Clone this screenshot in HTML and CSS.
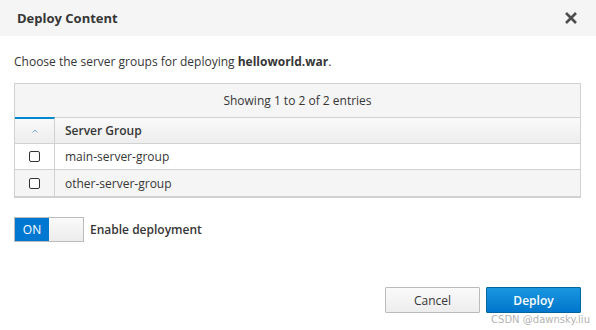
FILE: index.html
```html
<html>
<head>
    <title>Deploy Content</title>
    <link rel="stylesheet" href="styles.css">
</head>
<body>
<div class="modal">
    <div class="modal-header">
        <span class="modal-title">Deploy Content</span>
        <span class="close">
            <svg width="14" height="14" viewBox="0 0 14 14"><path d="M2 2 L12 12 M12 2 L2 12" stroke="#4d4d4d" stroke-width="2.6"/></svg>
        </span>
    </div>
    <div class="modal-body">
        <p class="intro">Choose the server groups for deploying <b>helloworld.war</b>.</p>
        <div class="table">
            <div class="caption">Showing 1 to 2 of 2 entries</div>
            <div class="row head">
                <div class="cell check sorted">
                    <svg width="6" height="4" viewBox="0 0 6 4"><path d="M0.5 3.5 L3 1 L5.5 3.5" stroke="#7aa9d6" stroke-width="1" fill="none"/></svg>
                </div>
                <div class="cell name">Server Group</div>
            </div>
            <div class="row">
                <div class="cell check"><span class="box"></span></div>
                <div class="cell name">main-server-group</div>
            </div>
            <div class="row odd">
                <div class="cell check"><span class="box"></span></div>
                <div class="cell name">other-server-group</div>
            </div>
        </div>
        <div class="switch-line">
            <div class="switch">
                <span class="on">ON</span>
                <span class="handle"></span>
            </div>
            <span class="switch-label">Enable deployment</span>
        </div>
    </div>
    <div class="modal-footer">
        <button class="btn">Cancel</button>
        <button class="btn primary">Deploy</button>
    </div>
    <div class="mark">CSDN @dawnsky.liu</div>
</div>
</body>
</html>
```

FILE: styles.css
```css
*{
    margin: 0;
    padding: 0;
    box-sizing: border-box;
    font-family: 'Open Sans', sans-serif;
}
body{
    width: 596px;
    height: 330px;
    background: #fff;
    color: #363636;
    font-size: 12px;
}
.modal{
    position: relative;
    width: 596px;
    height: 330px;
}
.modal-header{
    height: 36px;
    background: #f5f5f5;
    display: flex;
    align-items: center;
    justify-content: space-between;
    padding: 0 17px 0 17px;
}
.modal-title{
    font-size: 13px;
    font-weight: bold;
    color: #363636;
}
.close{
    display: flex;
    margin-right: 1px;
}
.modal-body{
    padding: 18px 15px 0 14px;
}
.intro{
    line-height: 16px;
    margin-bottom: 13px;
}
.intro b{
    font-weight: bold;
}
.table{
    border: 1px solid #d1d1d1;
    border-bottom: 2px solid #d1d1d1;
}
.caption{
    height: 34px;
    line-height: 33px;
    text-align: center;
    background: #f5f5f5;
    border-bottom: 1px solid #d1d1d1;
}
.row{
    display: flex;
    height: 26px;
    border-bottom: 1px solid #d1d1d1;
}
.row:last-child{
    border-bottom: 0;
}
.row.head{
    background: linear-gradient(#fafafa, #ededed);
    font-weight: 600;
}
.row.odd{
    background: #f5f5f5;
}
.cell{
    display: flex;
    align-items: center;
}
.check{
    width: 40px;
    justify-content: center;
    border-right: 1px solid #d1d1d1;
}
.check.sorted{
    border-top: 2px solid #0088ce;
    margin-top: -1px;
}
.name{
    padding-left: 10px;
}
.box{
    width: 11px;
    height: 11px;
    border: 1px solid #333;
    border-radius: 2px;
    background: #fff;
}
.switch-line{
    display: flex;
    align-items: center;
    margin-top: 19px;
}
.switch{
    display: flex;
    width: 70px;
    height: 25px;
    border: 1px solid #bbb;
}
.switch .on{
    width: 34px;
    background: #0078d2;
    color: #fff;
    display: flex;
    align-items: center;
    justify-content: center;
    font-size: 12px;
}
.switch .handle{
    flex: 1;
    background: linear-gradient(#fafafa, #ececec);
}
.switch-label{
    font-weight: 600;
    margin-left: 6px;
}
.modal-footer{
    display: flex;
    justify-content: flex-end;
    gap: 6px;
    padding: 45px 15px 0 0;
}
.btn{
    width: 95px;
    height: 26px;
    border: 1px solid #bbb;
    background: linear-gradient(#fafafa, #ededed);
    color: #363636;
    font-size: 12px;
    border-radius: 1px;
}
.btn.primary{
    background: linear-gradient(#1a96e0, #0077cc);
    border-color: #00659c;
    color: #fff;
    font-weight: 600;
}
.mark{
    position: absolute;
    right: 6px;
    bottom: 5px;
    font-family: 'DejaVu Sans', sans-serif;
    font-size: 10px;
    color: #b4b4b4;
}
```
